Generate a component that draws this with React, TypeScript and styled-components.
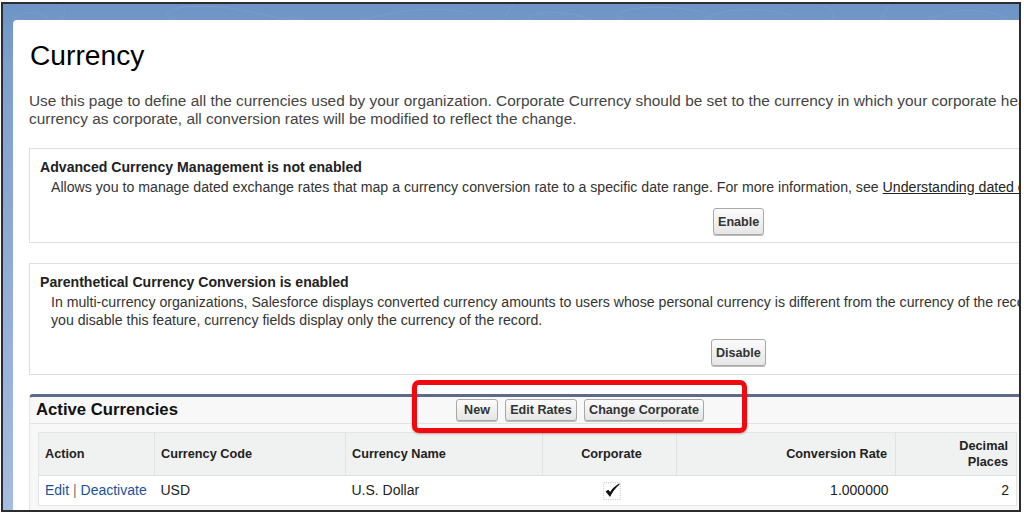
import React from "react";
import styled, { createGlobalStyle } from "styled-components";

const GlobalStyle = createGlobalStyle`
  html, body {
    margin: 0;
    padding: 0;
    background: #fff;
  }
  body {
    font-family: "Liberation Sans", Arial, sans-serif;
    color: #333;
  }
`;

const columns = [
  { key: "action", label: "Action", width: 116, align: "left" },
  { key: "code", label: "Currency Code", width: 191, align: "left" },
  { key: "name", label: "Currency Name", width: 197, align: "left" },
  { key: "corporate", label: "Corporate", width: 134, align: "center" },
  { key: "rate", label: "Conversion Rate", width: 219, align: "right" },
  { key: "places", label: "Decimal Places", width: 121, align: "right" },
];

const App = () => {
  return (
    <Frame>
      <GlobalStyle />
      <Swirls viewBox="0 0 1018 20" preserveAspectRatio="none">
        <path d="M10 20C20 8 36 6 46 20M58 20C66 10 60 4 56 0M170 20C150 6 190 -4 240 8S260 16 300 20" />
        <path d="M360 20C400 6 440 2 470 12M500 20L512 0M524 20C530 8 560 6 590 20M620 20C600 6 660 -2 700 10" />
        <path d="M700 20C720 4 760 4 790 14M830 20C836 10 826 4 820 0M880 20L888 0M930 20C950 2 990 6 1010 20" />
      </Swirls>
      <Card>
        <Title>Currency</Title>
        <Intro>
          Use this page to define all the currencies used by your organization. Corporate Currency should be set to the currency in which your corporate headquarters reports revenue. If you designate a different
          <br />
          currency as corporate, all conversion rates will be modified to reflect the change.
        </Intro>

        <Notice $height={95} $gap={20}>
          <NoticeTitle>Advanced Currency Management is not enabled</NoticeTitle>
          <NoticeText>
            Allows you to manage dated exchange rates that map a currency conversion rate to a specific date range. For more information, see <DocLink>Understanding dated exchange rates</DocLink>
          </NoticeText>
          <NoticeActions $top={12} $left={673}>
            <BigButton>Enable</BigButton>
          </NoticeActions>
        </Notice>

        <Notice $height={112} $gap={20}>
          <NoticeTitle>Parenthetical Currency Conversion is enabled</NoticeTitle>
          <NoticeText>
            In multi-currency organizations, Salesforce displays converted currency amounts to users whose personal currency is different from the currency of the record. If
            <br />
            you disable this feature, currency fields display only the currency of the record.
          </NoticeText>
          <NoticeActions $top={10} $left={671}>
            <BigButton>Disable</BigButton>
          </NoticeActions>
        </Notice>

        <Panel>
          <PanelHeader>
            <PanelTitle>Active Currencies</PanelTitle>
            <PanelButtons>
              <SmallButton $width={42}>New</SmallButton>
              <SmallButton $width={72}>Edit Rates</SmallButton>
              <SmallButton $width={120}>Change Corporate</SmallButton>
            </PanelButtons>
          </PanelHeader>
          <TableWrap>
            <Table>
              <colgroup>
                {columns.map((c) => (
                  <col key={c.key} width={c.width} />
                ))}
              </colgroup>
              <thead>
                <tr>
                  {columns.map((c) => (
                    <HeadCell key={c.key} $align={c.align}>
                      {c.key === "places" ? (
                        <>
                          Decimal
                          <br />
                          Places
                        </>
                      ) : (
                        c.label
                      )}
                    </HeadCell>
                  ))}
                </tr>
              </thead>
              <tbody>
                <tr>
                  <BodyCell $align="left">
                    <ActionLink>Edit</ActionLink> <Divider>|</Divider> <ActionLink>Deactivate</ActionLink>
                  </BodyCell>
                  <BodyCell $align="left">USD</BodyCell>
                  <BodyCell $align="left">U.S. Dollar</BodyCell>
                  <BodyCell $align="center">
                    <CheckBox viewBox="0 0 16 16">
                      <rect x="0.5" y="0.5" width="15" height="15" fill="none" stroke="#ccc" strokeWidth="1" strokeDasharray="1 1" />
                      <path d="M3 8.5L6.2 12.5C8 8.5 10.6 5 14.5 1.8C10.8 4 8.2 6.6 6.3 9.6L4.6 7.4Z" fill="#111" stroke="#111" strokeWidth="0.9" />
                    </CheckBox>
                  </BodyCell>
                  <BodyCell $align="right">1.000000</BodyCell>
                  <BodyCell $align="right">2</BodyCell>
                </tr>
              </tbody>
            </Table>
          </TableWrap>
        </Panel>
      </Card>
      <Highlight />
    </Frame>
  );
};

const Frame = styled.div`
  position: relative;
  box-sizing: border-box;
  width: 1020px;
  height: 510px;
  margin: 2px 0 0 1px;
  border: 2px solid #2c2c2c;
  overflow: hidden;
  background: linear-gradient(180deg, #6d94c5 0, #7f9fcd 60px, #a6bce0 100%);
`;

const Swirls = styled.svg`
  position: absolute;
  top: 0;
  left: 0;
  width: 100%;
  height: 16px;
  fill: none;
  stroke: #7b9dcb;
  stroke-width: 1;
`;

const Card = styled.div`
  position: relative;
  box-sizing: border-box;
  width: 1100px;
  height: 520px;
  margin: 16px 0 0 10px;
  padding: 17px 0 0 16px;
  background: #fff;
  border-radius: 4px 0 0 0;
`;

const Title = styled.h1`
  margin: 0 0 0 1px;
  font-size: 28.2px;
  line-height: 36px;
  font-weight: 400;
  color: #000;
`;

const Intro = styled.p`
  margin: 19px 0 0;
  font-size: 15.4px;
  line-height: 18px;
  color: #444;
  white-space: nowrap;
`;

const Notice = styled.section<{ $height: number; $gap: number }>`
  box-sizing: border-box;
  height: ${(p) => p.$height}px;
  margin-top: ${(p) => p.$gap}px;
  padding: 9px 0 0 10px;
  border: 1px solid #d9dfe3;
  white-space: nowrap;
`;

const NoticeTitle = styled.h2`
  margin: 0;
  font-size: 14.1px;
  line-height: 18px;
  font-weight: 700;
  color: #222;
`;

const NoticeText = styled.p`
  margin: 2px 0 0 11px;
  font-size: 14.15px;
  line-height: 18px;
  color: #333;
`;

const NoticeActions = styled.div<{ $top: number; $left: number }>`
  display: flex;
  margin: ${(p) => p.$top}px 0 0 ${(p) => p.$left}px;
`;

const DocLink = styled.span`
  color: #222;
  text-decoration: underline;
`;

const ButtonBase = styled.button`
  box-sizing: border-box;
  font-family: inherit;
  font-weight: 700;
  font-size: 12.6px;
  color: #333;
  border: 1px solid #a8a8a8;
  border-radius: 3px;
  background: linear-gradient(180deg, #fbfbfb, #e6e6e6);
  box-shadow: 0 1px 0 #bbb;
`;

const BigButton = styled(ButtonBase)`
  height: 27px;
  padding: 0 4px;
`;

const SmallButton = styled(ButtonBase)<{ $width: number }>`
  width: ${(p) => p.$width}px;
  height: 22px;
  padding: 0;
`;

const Panel = styled.section`
  box-sizing: border-box;
  margin-top: 19px;
  height: 130px;
  background: #f8f8f8;
  border-top: 3px solid #5d6a8c;
  border-left: 1px solid #e2e4e6;
  border-radius: 4px 0 0 0;
`;

const PanelHeader = styled.div`
  display: flex;
  align-items: center;
  box-sizing: border-box;
  height: 27px;
  padding-left: 6px;
  border-bottom: 1px solid #e3e3e3;
`;

const PanelTitle = styled.h3`
  width: 420px;
  margin: 0;
  flex: none;
  font-size: 16.7px;
  font-weight: 700;
  color: #111;
`;

const PanelButtons = styled.div`
  display: flex;
  gap: 7px;
`;

const TableWrap = styled.div`
  padding: 8px 0 0 8px;
`;

const Table = styled.table`
  width: 978px;
  table-layout: fixed;
  border-collapse: collapse;
  background: #fff;
  border: 1px solid #e3e5e7;
`;

const HeadCell = styled.th<{ $align: string }>`
  box-sizing: border-box;
  height: 43px;
  padding: ${(p) => (p.$align === "center" ? "0 4px 0 8px" : "0 8px 0 6px")};
  font-size: 12.7px;
  line-height: 16px;
  font-weight: 700;
  color: #222;
  text-align: ${(p) => p.$align};
  background: #f0f1f1;
  border-right: 1px solid #e0e3e5;
  border-bottom: 1px solid #e0e3e5;
`;

const BodyCell = styled.td<{ $align: string }>`
  box-sizing: border-box;
  height: 30px;
  padding: ${(p) => (p.$align === "center" ? "0 4px 0 8px" : "0 7px 2px 6px")};
  font-size: 14px;
  color: #222;
  text-align: ${(p) => p.$align};
  white-space: nowrap;
`;

const ActionLink = styled.span`
  color: #1b5297;
`;

const Divider = styled.span`
  color: #777;
`;

const CheckBox = styled.svg`
  display: block;
  width: 18px;
  height: 18px;
  margin: 0 auto;
`;

const Highlight = styled.div`
  position: absolute;
  top: 376px;
  left: 409px;
  box-sizing: border-box;
  width: 335px;
  height: 53px;
  border: 5px solid #ee0a0f;
  border-radius: 7px;
  box-shadow: 0 1px 2px rgba(120, 0, 0, 0.35);
`;

export default App;
